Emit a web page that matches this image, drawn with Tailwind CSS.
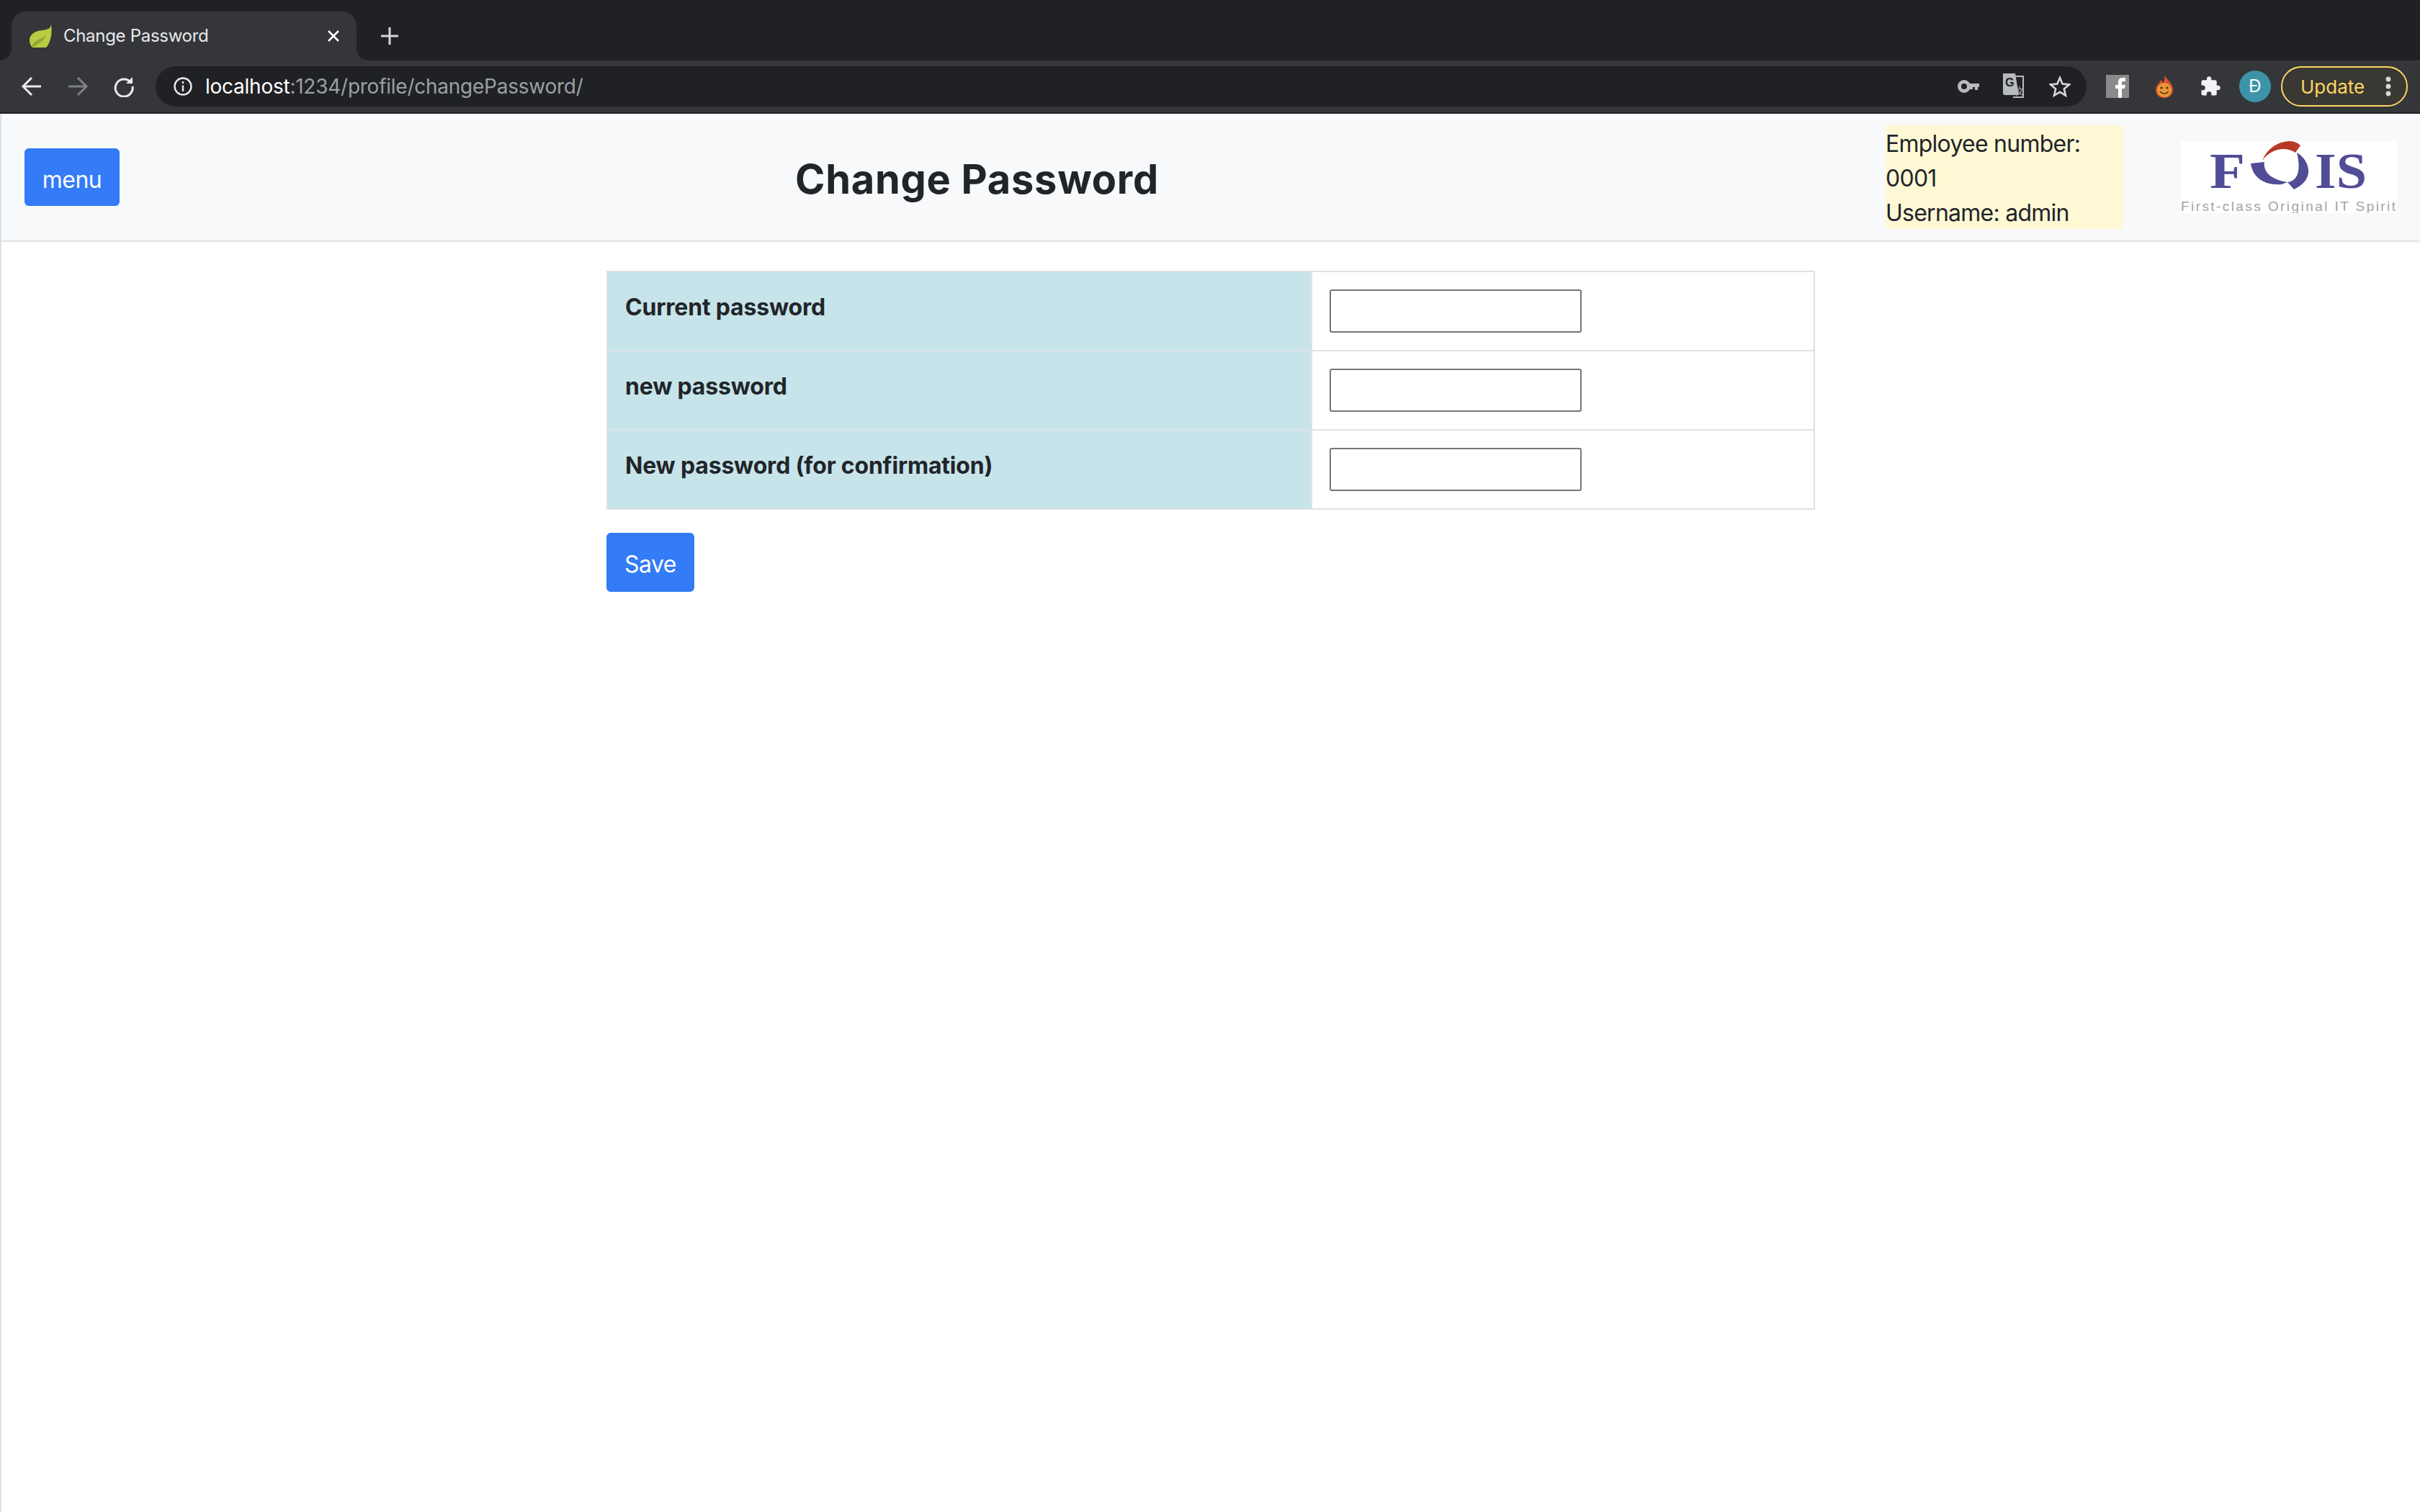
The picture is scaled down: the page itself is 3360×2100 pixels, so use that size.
<!DOCTYPE html>
<html lang="en">
<head>
    <meta charset="UTF-8">
    <title>Change Password</title>
    <script src="https://cdn.jsdelivr.net/npm/@tailwindcss/browser@4"></script>
</head>
<body class="flex flex-col h-screen overflow-hidden bg-white font-['Inter',sans-serif] text-[#212529]">
    <!-- Tab strip -->
    <div class="flex items-end h-[84px] shrink-0 bg-[#202124] pl-[16px]">
        <div class="relative flex items-center w-[479px] h-[68px] rounded-t-[20px] bg-[#35363a] pl-[24px]">
            <svg class="absolute left-[-16px] bottom-0 w-[16px] h-[16px]" viewBox="0 0 16 16"><path d="M16 0V16H0C9 16 16 9 16 0Z" fill="#35363a"/></svg>
            <svg class="absolute right-[-16px] bottom-0 w-[16px] h-[16px]" viewBox="0 0 16 16"><path d="M0 0V16H16C7 16 0 9 0 0Z" fill="#35363a"/></svg>
            <svg class="w-[32px] h-[32px] shrink-0" viewBox="0 0 32 32">
                <path d="M31 0C30 6 26 7 19 8C9 9 1 13 1 22C1 26 3 30 5 32H24C30 26 33 12 31 0Z" fill="#b9cc42"/>
                <path d="M4 30C9 20 17 21 25 15C20 24 13 26 6 32Z" fill="#8ea832"/>
            </svg>
            <span class="ml-[16px] text-[24px] tracking-[-0.3px] text-[#e8eaed]">Change Password</span>
            <svg class="absolute right-[23px] top-[25px] w-[18px] h-[18px]" viewBox="0 0 18 18" fill="none" stroke="#fff" stroke-width="2.6"><path d="M2 2L16 16M16 2L2 16"/></svg>
        </div>
        <svg class="ml-[33px] mb-[21px] w-[26px] h-[26px]" viewBox="0 0 26 26" fill="none" stroke="#d5d7da" stroke-width="3"><path d="M13 1V25M1 13H25"/></svg>
    </div>

    <!-- Toolbar -->
    <div class="flex items-center h-[72px] shrink-0 bg-[#35363a] pl-[29px] pr-[16px]">
        <svg class="w-[30px] h-[30px] shrink-0" viewBox="0 0 30 30" fill="none" stroke="#e8eaed" stroke-width="3"><path d="M28 15H4M15 3L3 15L15 27"/></svg>
        <svg class="ml-[34px] w-[30px] h-[30px] shrink-0" viewBox="0 0 30 30" fill="none" stroke="#7f8184" stroke-width="3"><path d="M2 15H26M15 3L27 15L15 27"/></svg>
        <svg class="ml-[34px] w-[30px] h-[30px] shrink-0" viewBox="0 0 30 30" fill="none" stroke="#e8eaed" stroke-width="3"><path d="M24.5 9.5A12 12 0 1 0 27 15"/><path d="M27 2V11H18Z" fill="#e8eaed" stroke="none"/></svg>
        <div class="flex items-center ml-[29px] w-[2681px] h-[56px] rounded-full bg-[#202124] pl-[24px]">
            <svg class="w-[28px] h-[28px] shrink-0" viewBox="0 0 28 28" fill="none" stroke="#e8eaed" stroke-width="2.4"><circle cx="14" cy="14" r="11.5"/><path d="M14 12.5V21M14 7V10"/></svg>
            <span class="ml-[17px] text-[28px] tracking-[-0.25px] text-white">localhost<span class="text-[#9aa0a6]">:1234/profile/changePassword/</span></span>
            <svg class="ml-auto w-[30px] h-[18px] shrink-0" viewBox="0 0 30 18" fill="#b8babd"><path d="M9 0A9 9 0 1 1 9 18A9 9 0 0 1 9 0ZM9 5A4 4 0 1 0 9 13A4 4 0 0 0 9 5Z" fill-rule="evenodd"/><path d="M16 5H30V10H28V14H24V10H21V13H17Z"/></svg>
            <svg class="ml-[33px] w-[30px] h-[36px] shrink-0" viewBox="0 0 30 36">
                <path d="M14 4H28V33H14" fill="none" stroke="#b8babd" stroke-width="2"/>
                <path d="M0 0H17L22 30H3Q0 30 0 27Z" fill="#b8babd"/>
                <text x="3" y="18" font-family="Liberation Sans" font-weight="700" font-size="16" fill="#202124">G</text>
                <text x="17" y="29" font-family="Liberation Sans" font-size="13" fill="#b8babd">文</text>
            </svg>
            <svg class="ml-[34px] w-[30px] h-[30px] shrink-0" viewBox="0 0 30 30" fill="none" stroke="#d5d7da" stroke-width="2.6"><path d="M15 3L18.6 11.6L28 12.4L20.8 18.5L23 27.6L15 22.8L7 27.6L9.2 18.5L2 12.4L11.4 11.6Z"/></svg>
            <span class="w-[22px] shrink-0"></span>
        </div>
        <svg class="ml-[27px] w-[32px] h-[32px] shrink-0" viewBox="0 0 32 32">
            <rect width="32" height="32" fill="#8a8a8a"/>
            <path d="M17 32V19H13V14H17V10C17 6 19.5 4 23 4H27V9H24C22.5 9 22 9.7 22 11V14H27L26 19H22V32Z" fill="#fff"/>
        </svg>
        <svg class="ml-[36px] w-[26px] h-[32px] shrink-0" viewBox="0 0 26 32">
            <path d="M13 0C15 5 24 10 25 20C25 28 20 32 13 32C6 32 1 28 1 20C2 14 6 13 8 7C10 9 11 10 11 12C13 8 14 4 13 0Z" fill="#d9512a"/>
            <circle cx="13" cy="21" r="10" fill="#e8983a"/>
            <circle cx="9" cy="18" r="1.6" fill="#4a2a10"/><circle cx="17" cy="18" r="1.6" fill="#4a2a10"/>
            <path d="M7 23Q13 29 19 23" fill="none" stroke="#4a2a10" stroke-width="1.6"/>
        </svg>
        <svg class="ml-[36px] w-[30px] h-[30px] shrink-0" viewBox="0 0 24 24" fill="#f1f3f4"><path d="M20.5 11H19V7a2 2 0 0 0-2-2h-4V3.5a2.5 2.5 0 0 0-5 0V5H4a2 2 0 0 0-2 2v3.8h1.5a2.7 2.7 0 0 1 0 5.4H2V20a2 2 0 0 0 2 2h3.8v-1.5a2.7 2.7 0 0 1 5.4 0V22H17a2 2 0 0 0 2-2v-4h1.5a2.5 2.5 0 0 0 0-5z"/></svg>
        <div class="flex items-center justify-center ml-[25px] w-[44px] h-[44px] shrink-0 rounded-full bg-[#3d94a8] text-[24px] text-white">Đ</div>
        <div class="flex items-center ml-[14px] w-[176px] h-[56px] shrink-0 rounded-full border-2 border-[#fdd663] bg-[#3a3833] pl-[25px]">
            <span class="text-[26px] text-[#fdd663]">Update</span>
            <svg class="ml-auto mr-[21px] w-[8px] h-[28px]" viewBox="0 0 8 28" fill="#d5d7da"><circle cx="4" cy="4" r="3.4"/><circle cx="4" cy="14" r="3.4"/><circle cx="4" cy="24" r="3.4"/></svg>
        </div>
    </div>
    <div class="h-[2px] shrink-0 bg-[#202124]"></div>

    <!-- Page -->
    <div class="flex-1 flex flex-col border-l-2 border-[#dee2e6]">
        <header class="flex items-center h-[178px] shrink-0 bg-[#f8f9fa] border-b-2 border-[#dee2e6] pl-[32px] pr-[32px]">
            <button class="w-[132px] h-[80px] pt-[8px] rounded-[6px] bg-[#337bf7] text-[32px] tracking-[-0.5px] text-white">menu</button>
            <h1 class="ml-[938px] mt-[7px] text-[56px] leading-[67px] font-bold tracking-[0.7px] whitespace-nowrap">Change Password</h1>
            <div class="ml-auto w-[330px] h-[144px] bg-[#fff8d5] pt-[2px] text-[32px] leading-[48px] tracking-[-0.75px]">
                <p>Employee number:</p>
                <p>0001</p>
                <p>Username: admin</p>
            </div>
            <svg class="ml-[80px] w-[300px] h-[100px] bg-white" viewBox="0 0 300 100">
                <text x="40" y="65" font-family="Liberation Serif" font-weight="700" font-size="70" fill="#514c96" textLength="49" lengthAdjust="spacingAndGlyphs">F</text>
                <path d="M97 31L116 29C114 42 124 53 148 57L140 60C118 62 100 52 97 31Z" fill="#514c96"/>
                <path d="M161 16C172 22 178 34 177 44C176 54 168 62 157 67L148 57C160 56 168 44 161 16Z" fill="#514c96"/>
                <path d="M113 27C120 10 134 1 150 0C158 0 163 3 166 6L159 16C146 7 125 10 113 27Z" fill="#b83a24"/>
                <text x="186" y="65" font-family="Liberation Serif" font-weight="700" font-size="70" fill="#514c96" textLength="72" lengthAdjust="spacingAndGlyphs">IS</text>
                <text x="0" y="97" font-family="Liberation Sans" font-size="19" fill="#a3a3a3" textLength="298">First-class Original IT Spirit</text>
            </svg>
        </header>

        <main class="w-[1678px] mx-auto mt-[40px]">
            <table class="w-full border-collapse text-[32px] leading-[48px]">
                <tbody>
                    <tr class="h-[110px]">
                        <th class="w-[978px] align-top text-left font-bold tracking-[-0.2px] bg-[#c7e4ea] border-2 border-[#dee2e6] pl-[24px] pt-[25px]">Current password</th>
                        <td class="align-top border-2 border-[#dee2e6] pl-[24px] pt-[24px]"><input type="password" class="block w-[350px] h-[60px] bg-white border-2 border-[#767676] rounded-[3px]"></td>
                    </tr>
                    <tr class="h-[110px]">
                        <th class="align-top text-left font-bold tracking-[-0.2px] bg-[#c7e4ea] border-2 border-[#dee2e6] pl-[24px] pt-[25px]">new password</th>
                        <td class="align-top border-2 border-[#dee2e6] pl-[24px] pt-[24px]"><input type="password" class="block w-[350px] h-[60px] bg-white border-2 border-[#767676] rounded-[3px]"></td>
                    </tr>
                    <tr class="h-[110px]">
                        <th class="align-top text-left font-bold tracking-[-0.2px] bg-[#c7e4ea] border-2 border-[#dee2e6] pl-[24px] pt-[25px]">New password (for confirmation)</th>
                        <td class="align-top border-2 border-[#dee2e6] pl-[24px] pt-[24px]"><input type="password" class="block w-[350px] h-[60px] bg-white border-2 border-[#767676] rounded-[3px]"></td>
                    </tr>
                </tbody>
            </table>
            <button class="block mt-[32px] w-[122px] h-[82px] pt-[5px] rounded-[6px] bg-[#337bf7] text-[32px] tracking-[-0.5px] text-white">Save</button>
        </main>
    </div>
</body>
</html>
